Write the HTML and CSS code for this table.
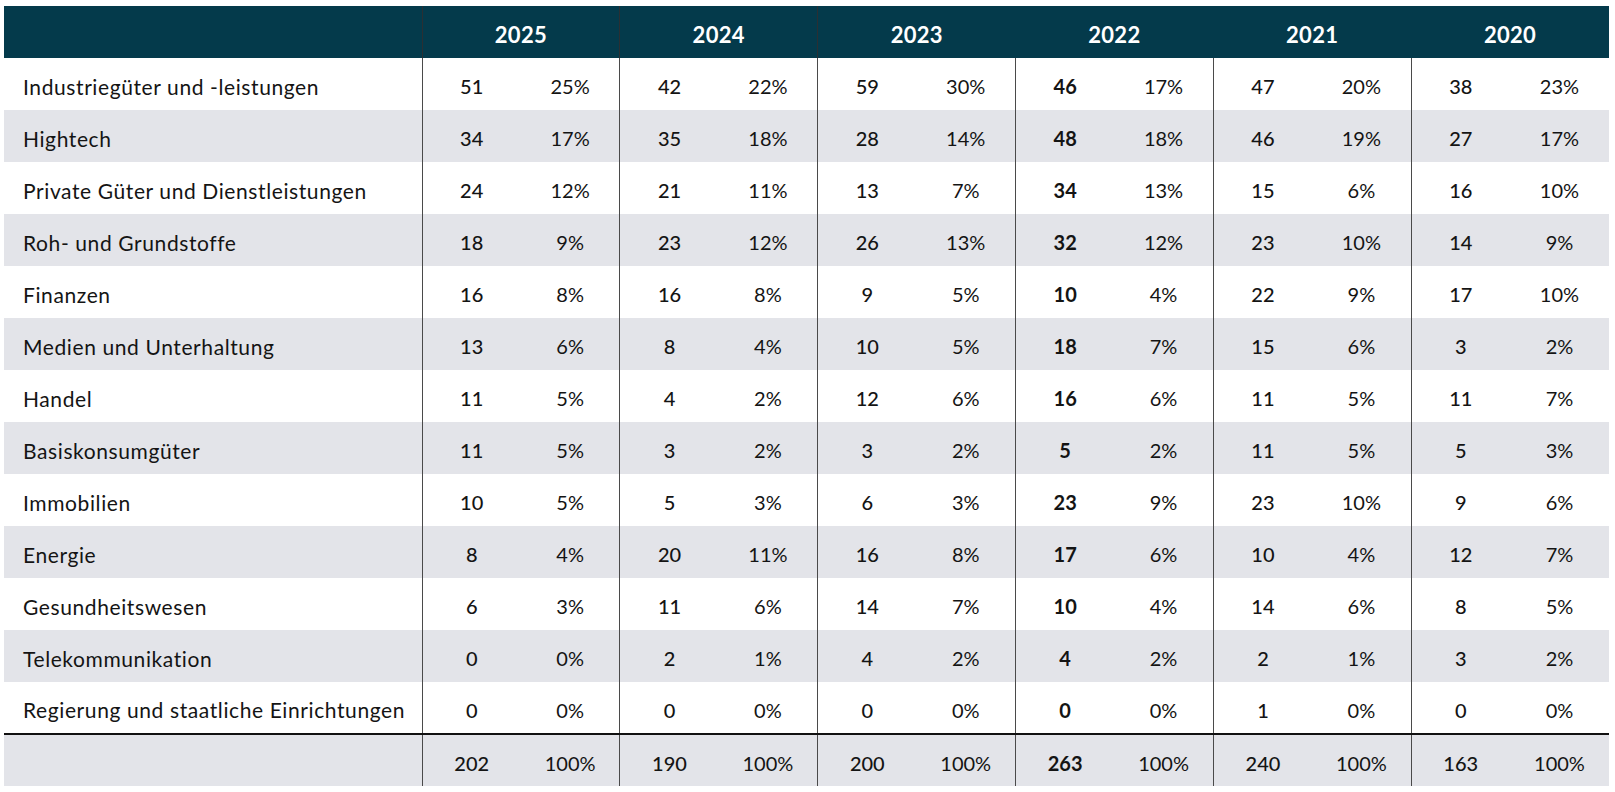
FILE: index.html
```html
<!DOCTYPE html>
<html lang="de">
<head>
<meta charset="utf-8">
<title>Branchen</title>
<link rel="stylesheet" href="styles.css">
</head>
<body>
<div class="wrap">
<table class="tbl">
<colgroup>
<col class="c-label">
<col><col><col><col><col><col><col><col><col><col><col><col>
</colgroup>
<thead>
<tr>
<th class="label sep"></th>
<th colspan="2" class="sep">2025</th>
<th colspan="2" class="sep">2024</th>
<th colspan="2">2023</th>
<th colspan="2">2022</th>
<th colspan="2">2021</th>
<th colspan="2">2020</th>
</tr>
</thead>
<tbody>
<tr><td class="label">Industriegüter und -leistungen</td><td class="n">51</td><td class="p">25%</td><td class="n">42</td><td class="p">22%</td><td class="n">59</td><td class="p">30%</td><td class="n b">46</td><td class="p">17%</td><td class="n">47</td><td class="p">20%</td><td class="n">38</td><td class="p last">23%</td></tr>
<tr><td class="label">Hightech</td><td class="n">34</td><td class="p">17%</td><td class="n">35</td><td class="p">18%</td><td class="n">28</td><td class="p">14%</td><td class="n b">48</td><td class="p">18%</td><td class="n">46</td><td class="p">19%</td><td class="n">27</td><td class="p last">17%</td></tr>
<tr><td class="label">Private Güter und Dienstleistungen</td><td class="n">24</td><td class="p">12%</td><td class="n">21</td><td class="p">11%</td><td class="n">13</td><td class="p">7%</td><td class="n b">34</td><td class="p">13%</td><td class="n">15</td><td class="p">6%</td><td class="n">16</td><td class="p last">10%</td></tr>
<tr><td class="label">Roh- und Grundstoffe</td><td class="n">18</td><td class="p">9%</td><td class="n">23</td><td class="p">12%</td><td class="n">26</td><td class="p">13%</td><td class="n b">32</td><td class="p">12%</td><td class="n">23</td><td class="p">10%</td><td class="n">14</td><td class="p last">9%</td></tr>
<tr><td class="label">Finanzen</td><td class="n">16</td><td class="p">8%</td><td class="n">16</td><td class="p">8%</td><td class="n">9</td><td class="p">5%</td><td class="n b">10</td><td class="p">4%</td><td class="n">22</td><td class="p">9%</td><td class="n">17</td><td class="p last">10%</td></tr>
<tr><td class="label">Medien und Unterhaltung</td><td class="n">13</td><td class="p">6%</td><td class="n">8</td><td class="p">4%</td><td class="n">10</td><td class="p">5%</td><td class="n b">18</td><td class="p">7%</td><td class="n">15</td><td class="p">6%</td><td class="n">3</td><td class="p last">2%</td></tr>
<tr><td class="label">Handel</td><td class="n">11</td><td class="p">5%</td><td class="n">4</td><td class="p">2%</td><td class="n">12</td><td class="p">6%</td><td class="n b">16</td><td class="p">6%</td><td class="n">11</td><td class="p">5%</td><td class="n">11</td><td class="p last">7%</td></tr>
<tr><td class="label">Basiskonsumgüter</td><td class="n">11</td><td class="p">5%</td><td class="n">3</td><td class="p">2%</td><td class="n">3</td><td class="p">2%</td><td class="n b">5</td><td class="p">2%</td><td class="n">11</td><td class="p">5%</td><td class="n">5</td><td class="p last">3%</td></tr>
<tr><td class="label">Immobilien</td><td class="n">10</td><td class="p">5%</td><td class="n">5</td><td class="p">3%</td><td class="n">6</td><td class="p">3%</td><td class="n b">23</td><td class="p">9%</td><td class="n">23</td><td class="p">10%</td><td class="n">9</td><td class="p last">6%</td></tr>
<tr><td class="label">Energie</td><td class="n">8</td><td class="p">4%</td><td class="n">20</td><td class="p">11%</td><td class="n">16</td><td class="p">8%</td><td class="n b">17</td><td class="p">6%</td><td class="n">10</td><td class="p">4%</td><td class="n">12</td><td class="p last">7%</td></tr>
<tr><td class="label">Gesundheitswesen</td><td class="n">6</td><td class="p">3%</td><td class="n">11</td><td class="p">6%</td><td class="n">14</td><td class="p">7%</td><td class="n b">10</td><td class="p">4%</td><td class="n">14</td><td class="p">6%</td><td class="n">8</td><td class="p last">5%</td></tr>
<tr><td class="label">Telekommunikation</td><td class="n">0</td><td class="p">0%</td><td class="n">2</td><td class="p">1%</td><td class="n">4</td><td class="p">2%</td><td class="n b">4</td><td class="p">2%</td><td class="n">2</td><td class="p">1%</td><td class="n">3</td><td class="p last">2%</td></tr>
<tr><td class="label">Regierung und staatliche Einrichtungen</td><td class="n">0</td><td class="p">0%</td><td class="n">0</td><td class="p">0%</td><td class="n">0</td><td class="p">0%</td><td class="n b">0</td><td class="p">0%</td><td class="n">1</td><td class="p">0%</td><td class="n">0</td><td class="p last">0%</td></tr>
</tbody>
<tfoot>
<tr><td class="label"></td><td class="n">202</td><td class="p">100%</td><td class="n">190</td><td class="p">100%</td><td class="n">200</td><td class="p">100%</td><td class="n b">263</td><td class="p">100%</td><td class="n">240</td><td class="p">100%</td><td class="n">163</td><td class="p last">100%</td></tr>
</tfoot>
</table>
</div>
</body>
</html>
```
FILE: styles.css
```css
html, body {
  margin: 0;
  padding: 0;
  background: #ffffff;
}

.wrap {
  padding: 6px 0 0 4px;
}

.tbl {
  width: 1605px;
  table-layout: fixed;
  border-collapse: collapse;
  font-family: "Lato", "Liberation Sans", sans-serif;
  font-size: 20px;
  color: #141414;
}

.c-label {
  width: 418px;
}

.tbl th {
  background: #043a4b;
  color: #ffffff;
  font-weight: 700;
  height: 52px;
  padding: 4px 0 0;
  text-align: center;
  font-size: 22px;
  letter-spacing: 0.3px;
  box-sizing: border-box;
}

.tbl th.sep {
  border-right: 1px solid #2a2f33;
}

.tbl td {
  height: 52px;
  padding: 4px 0 0;
  box-sizing: border-box;
  text-align: center;
  vertical-align: middle;
}

.tbl tbody tr:nth-child(even) td,
.tbl tfoot td {
  background: #e3e4e9;
}

.tbl td.label {
  text-align: left;
  padding-left: 19px;
  font-size: 21px;
  letter-spacing: 0.6px;
  border-right: 1px solid #4a4a4a;
  white-space: nowrap;
}

.tbl td.n {
  font-weight: 500;
}

.tbl td.n.b {
  font-weight: 700;
}

.tbl td.p {
  font-weight: 400;
  border-right: 1px solid #4a4a4a;
}

.tbl td.p.last {
  border-right: none;
}

.tbl tfoot td {
  border-top: 2px solid #111111;
}
```
